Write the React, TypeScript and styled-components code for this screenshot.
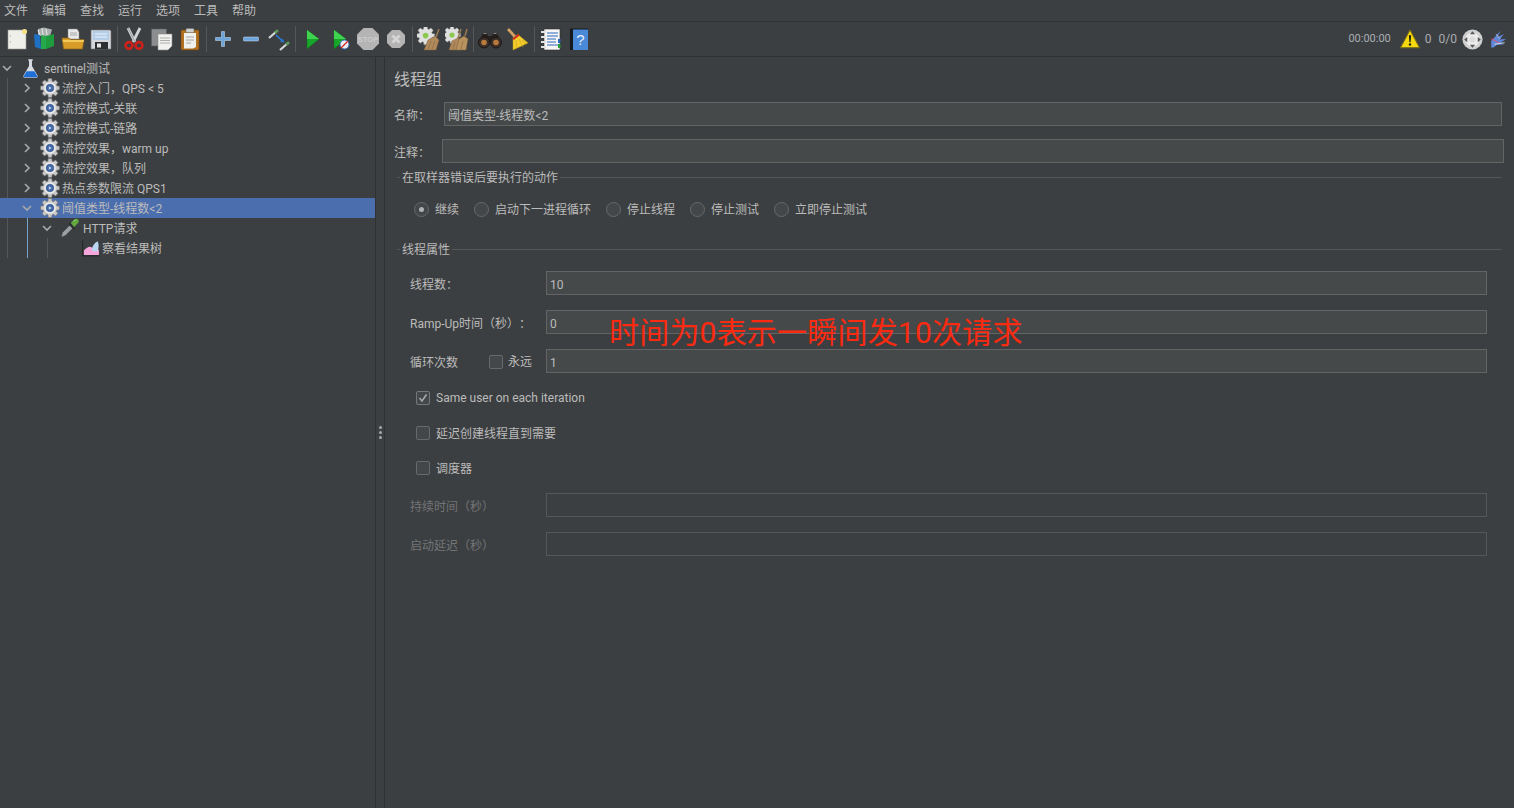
import React from 'react';
import styled, { createGlobalStyle } from 'styled-components';

const GlobalStyle = createGlobalStyle`
  html, body {
    margin: 0;
    height: 100%;
    overflow: hidden;
    background: #3c3f41;
  }
  body {
    color: #bbbbbb;
    font-family: Roboto, "Noto Sans CJK SC", sans-serif;
    font-size: 12px;
    line-height: 16px;
    text-spacing-trim: space-all;
  }
`;

const Window = styled.div`
  position: relative;
  display: flex;
  flex-direction: column;
  width: 1514px;
  height: 808px;
  overflow: hidden;
`;

const MenuBar = styled.div`
  display: flex;
  align-items: center;
  gap: 14px;
  height: 22px;
  padding: 1px 0 0 4px;
  border-bottom: 1px solid #2f3132;
  box-sizing: border-box;
`;

const MenuItem = styled.span`
  color: #bbbbbb;
`;

const Toolbar = styled.div`
  display: flex;
  align-items: center;
  height: 35px;
  padding-left: 3px;
  border-bottom: 1px solid #2f3132;
  box-sizing: border-box;
`;

const ToolButton = styled.div`
  display: flex;
  align-items: center;
  justify-content: center;
  width: 28px;
  height: 34px;
`;

const ToolSeparator = styled.div`
  width: 1px;
  height: 26px;
  margin: 0 2px;
  background: #55585a;
`;

const Status = styled.div`
  display: flex;
  align-items: center;
  margin-left: auto;
  padding-right: 7px;
  color: #a9adb3;
  font-size: 12px;
`;

const StatusTime = styled.span`
  font-size: 11px;
`;

const StatusText = styled.span<{ $left: number }>`
  margin-left: ${(p) => p.$left}px;
`;

const StatusIcon = styled.span<{ $left: number }>`
  display: flex;
  margin-left: ${(p) => p.$left}px;
`;

const Split = styled.div`
  flex: 1;
  display: flex;
  min-height: 0;
`;

const TreePane = styled.div`
  width: 375px;
  padding-top: 1px;
`;

const TreeRow = styled.div<{ $indent: number; $selected?: boolean }>`
  position: relative;
  display: flex;
  align-items: center;
  height: 20px;
  padding-left: ${(p) => p.$indent}px;
  background: ${(p) => (p.$selected ? '#4b6eaf' : 'transparent')};
  color: #bbbbbb;
  white-space: nowrap;
`;

const Guide = styled.span<{ $x: number; $active?: boolean }>`
  position: absolute;
  top: 0;
  bottom: 0;
  left: ${(p) => p.$x}px;
  width: 1px;
  background: ${(p) => (p.$active ? '#7aa3c9' : '#54575a')};
`;

const Chevron = styled.svg`
  flex: none;
  width: 12px;
  height: 12px;
  margin-right: 7px;
  fill: none;
  stroke: #a7a9ab;
  stroke-width: 1.6;
`;

const NodeIcon = styled.span<{ $gap: number }>`
  display: flex;
  flex: none;
  margin-right: ${(p) => p.$gap}px;
`;

const RowText = styled.span`
  padding-top: 1px;
`;

const Divider = styled.div`
  flex: none;
  display: flex;
  flex-direction: column;
  align-items: center;
  justify-content: center;
  gap: 2px;
  width: 8px;
  border-left: 1px solid #2f3132;
  border-right: 1px solid #2f3132;
`;

const GripDot = styled.span`
  width: 3px;
  height: 3px;
  border-radius: 50%;
  background: #a8a8a8;
`;

const Panel = styled.div`
  flex: 1;
  padding: 11px 10px 0 9px;
`;

const Title = styled.div`
  height: 20px;
  font-size: 16px;
  line-height: 23px;
  color: #bbbbbb;
`;

const NameRow = styled.div<{ $top: number; $inputLeft: number; $inputRight: number }>`
  display: grid;
  grid-template-columns: ${(p) => p.$inputLeft}px 1fr;
  align-items: center;
  margin-top: ${(p) => p.$top}px;
  margin-right: ${(p) => p.$inputRight}px;
`;

const RowLabel = styled.span`
  padding-top: 4px;
`;

const Input = styled.div<{ $disabled?: boolean }>`
  display: flex;
  align-items: center;
  height: 24px;
  padding: 3px 0 0 3px;
  box-sizing: border-box;
  border: 1px solid ${(p) => (p.$disabled ? '#55585a' : '#646464')};
  background: ${(p) => (p.$disabled ? 'transparent' : '#45494a')};
  color: #bbbbbb;
`;

const SectionTitle = styled.div<{ $top: number }>`
  display: flex;
  align-items: center;
  gap: 2px;
  height: 16px;
  margin: ${(p) => p.$top}px 2px 0 3px;
  &::before,
  &::after {
    content: '';
    height: 1px;
    background: #55585a;
  }
  &::before {
    width: 3px;
  }
  &::after {
    flex: 1;
  }
`;

const SectionText = styled.span`
  padding-top: 1px;
`;

const RadioGroup = styled.div`
  display: flex;
  align-items: center;
  gap: 15px;
  height: 16px;
  margin: 16px 0 0 20px;
`;

const RadioItem = styled.label`
  display: flex;
  align-items: center;
  gap: 6px;
`;

const ControlText = styled.span<{ $flush?: boolean }>`
  padding-top: ${(p) => (p.$flush ? 0 : 1)}px;
`;

const RadioCircle = styled.span<{ $on?: boolean }>`
  display: flex;
  align-items: center;
  justify-content: center;
  width: 15px;
  height: 15px;
  box-sizing: border-box;
  border: 1px solid #666a6c;
  border-radius: 50%;
  background: #43474a;
  &::after {
    content: '';
    display: ${(p) => (p.$on ? 'block' : 'none')};
    width: 5px;
    height: 5px;
    border-radius: 50%;
    background: #b0b0b0;
  }
`;

const Fields = styled.div`
  margin: 0 17px 0 16px;
`;

const FieldRow = styled.div<{ $top: number }>`
  display: grid;
  grid-template-columns: 136px 1fr;
  align-items: center;
  margin-top: ${(p) => p.$top}px;
`;

const FieldLabel = styled.span<{ $disabled?: boolean }>`
  padding-top: 4px;
  color: ${(p) => (p.$disabled ? '#727476' : '#bbbbbb')};
`;

const LoopLabel = styled.div`
  display: flex;
  align-items: center;
`;

const LoopForever = styled.span`
  display: flex;
  align-items: center;
  gap: 5px;
  margin-left: 31px;
  padding-top: 2px;
`;

const CheckRow = styled.div<{ $top: number }>`
  display: flex;
  align-items: center;
  gap: 6px;
  height: 16px;
  margin: ${(p) => p.$top}px 0 0 6px;
`;

const CheckBox = styled.span<{ $on?: boolean }>`
  display: flex;
  align-items: center;
  justify-content: center;
  width: 14px;
  height: 14px;
  box-sizing: border-box;
  border: 1px solid ${(p) => (p.$on ? '#74787a' : '#666a6c')};
  border-radius: 2px;
  background: #43474a;
`;

const Annotation = styled.div`
  position: absolute;
  top: 313px;
  left: 609px;
  color: #fb2a10;
  font-size: 30px;
  line-height: 40px;
  letter-spacing: 0.2px;
  white-space: nowrap;
`;

const gearPath = (() => {
  const pts: string[] = [];
  for (let i = 0; i < 8; i++) {
    const a = (i * Math.PI) / 4 - Math.PI / 8;
    const s = Math.PI / 4;
    const at = (r: number, t: number) =>
      `${(12 + r * Math.cos(t)).toFixed(2)} ${(12 + r * Math.sin(t)).toFixed(2)}`;
    pts.push(at(8.6, a + s * 0.1), at(11.6, a + s * 0.27), at(11.6, a + s * 0.73), at(8.6, a + s * 0.9));
  }
  return `M${pts.join('L')}Z`;
})();

const Svg: React.FC<{ size?: number; children: React.ReactNode }> = ({ size = 24, children }) => (
  <svg width={size} height={size} viewBox="0 0 24 24">
    {children}
  </svg>
);

const Gear = () => (
  <Svg size={20}>
    <path d={gearPath} fill="#c9c9c9" stroke="#6e6e6e" strokeWidth="0.8" />
    <circle cx="12" cy="12" r="7" fill="#eeeeee" />
    <circle cx="12" cy="12" r="4.600" fill="#3f66a8" stroke="#27406e" strokeWidth="0.6" />
    <path d="M10.600 9.800l3.600 2.200-3.600 2.200z" fill="#c4d4ec" />
  </Svg>
);

const Flask = () => (
  <Svg size={21}>
    <path d="M9.500 1.500h5v1.500h-.8v6L20 20a1.600 1.600 0 0 1-1.400 2.500H5.400A1.600 1.600 0 0 1 4 20l6.300-11V3h-.8z" fill="#d6dbe2" />
    <path d="M7.600 15h8.800l3.300 5.600a1 1 0 0 1-.9 1.400H5.200a1 1 0 0 1-.9-1.400z" fill="#1f6fd6" />
  </Svg>
);

const Dropper = () => (
  <Svg size={20}>
    <path d="M1.500 23l1.500-5.500 9-9 3.500 3.500-9 9z" fill="#9aa0a4" stroke="#3a3d40" strokeWidth="0.5" />
    <path d="M10 7.500l6.500 6.500 2-2L12 5.500z" fill="#2b2d2f" />
    <path d="M13 6l4.500-4.500c2-1.500 5-.5 5 2 0 1-.5 1.900-1 2.500L17 11z" fill="#62a83c" />
    <path d="M16 4l3-2" stroke="#a6d884" strokeWidth="1" />
  </Svg>
);

const ResultTree = () => (
  <Svg size={20}>
    <path d="M2 3v18.500h20" fill="none" stroke="#26282a" strokeWidth="1.400" />
    <path d="M3.500 20.500V15c3-3 5-4.500 7-4.500s4 2 6 2.500l5 1v6.500z" fill="#f6a6dc" />
    <path d="M13 14c.5-4 3-8 7-10 1.500 3 1.500 8 0 11.500-2 1.500-5.500 1-7-1.500z" fill="#bcd6f2" />
  </Svg>
);

const icons: Record<string, React.ReactNode> = {
  newFile: (
    <Svg>
      <rect x="3" y="3" width="18" height="19" fill="#efefe9" stroke="#9a9a9a" strokeWidth="0.6" />
      <circle cx="19.500" cy="4.500" r="2.600" fill="#f5e08a" />
      <circle cx="5.500" cy="9" r="0.7" fill="#b5b5b5" />
      <circle cx="5.500" cy="15" r="0.7" fill="#b5b5b5" />
    </Svg>
  ),
  templates: (
    <Svg>
      <path d="M5 2l6-1.500 8 2-2 6.500H5z" fill="#a9b0ad" />
      <path d="M1 7l6 1 1 14-6-2z" fill="#1f6fc4" />
      <path d="M8 8l5 1v13H8z" fill="#27a84a" />
      <path d="M13 9l8-2v12l-8 3z" fill="#1f9a3c" />
      <path d="M5 3l2 5M9 1l1 7M13 2l1 6" stroke="#e0e4e2" strokeWidth="1.200" />
    </Svg>
  ),
  open: (
    <Svg>
      <path d="M7 2h9l2 3v7H7z" fill="#e8e8e8" stroke="#8a8a8a" strokeWidth="0.5" />
      <path d="M9 6h7M9 8h7" stroke="#9a9a9a" strokeWidth="0.8" />
      <path d="M1 11h7l1.500 1.500H23l-1.500 9.500H2.500z" fill="#d89c28" stroke="#8a6414" strokeWidth="0.7" />
      <path d="M1.500 13H23l-.3 2H2z" fill="#f3c95c" />
    </Svg>
  ),
  save: (
    <Svg>
      <path d="M2 3h19l1 1v18H2z" fill="#d4d8dc" stroke="#6e7074" strokeWidth="0.6" />
      <rect x="4" y="4" width="16" height="9" fill="#b4cde8" />
      <path d="M6 7h12M6 10h12" stroke="#eef3f8" strokeWidth="1" />
      <rect x="6" y="15" width="13" height="7" fill="#2c2e32" />
      <rect x="8" y="16.500" width="4" height="4" fill="#e6e6e6" />
    </Svg>
  ),
  cut: (
    <Svg>
      <path d="M6 1l7 14M18 1l-7 14" stroke="#d0d2d4" strokeWidth="2.800" />
      <path d="M6 1l7 14" stroke="#84878a" strokeWidth="0.7" />
      <circle cx="7" cy="18.500" r="3.400" fill="none" stroke="#d0201a" strokeWidth="2.600" />
      <circle cx="17" cy="18.500" r="3.400" fill="none" stroke="#d0201a" strokeWidth="2.600" />
    </Svg>
  ),
  copy: (
    <Svg>
      <rect x="1.500" y="2" width="15" height="17" fill="#8b8d8f" stroke="#5c5e60" strokeWidth="0.6" />
      <path d="M8 7h14v12l-4 4H8z" fill="#f1f1ef" stroke="#8a8a8a" strokeWidth="0.6" />
      <path d="M10 11h10M10 13.500h10M10 16h10" stroke="#9c9c9c" strokeWidth="0.8" />
    </Svg>
  ),
  paste: (
    <Svg>
      <rect x="3" y="3" width="18" height="20" rx="1" fill="#b07220" stroke="#6e4410" strokeWidth="0.6" />
      <path d="M6 6h12v14l-3 1.500H6z" fill="#f0f0ec" />
      <rect x="8" y="1.500" width="8" height="4" rx="1" fill="#cfd0d0" stroke="#6a6a6a" strokeWidth="0.5" />
      <path d="M8 10h8M8 13h8M8 16h5" stroke="#9c9c9c" strokeWidth="0.9" />
    </Svg>
  ),
  plus: (
    <Svg>
      <path d="M10.500 4.500h3v6h6v3h-6v6h-3v-6h-6v-3h6z" fill="#6ea4dc" stroke="#cfe0f2" strokeWidth="0.5" />
    </Svg>
  ),
  minus: (
    <Svg>
      <rect x="4.500" y="10" width="15" height="4" rx="0.800" fill="#6ea4dc" stroke="#cfe0f2" strokeWidth="0.5" />
    </Svg>
  ),
  toggle: (
    <Svg>
      <path d="M2 11l8-7" stroke="#d6d8d8" strokeWidth="2.200" />
      <path d="M8 5.800l3-2.600" stroke="#5f9a5c" strokeWidth="2.600" />
      <path d="M13 23l8-7" stroke="#d6d8d8" strokeWidth="2.200" />
      <path d="M19 17.800l3-2.600" stroke="#5f9a5c" strokeWidth="2.600" />
      <path d="M9 8l6 5.500" stroke="#2a7ad8" strokeWidth="1.500" />
      <path d="M17.500 15.500l-4.500-.8 2.800-3z" fill="#2a7ad8" />
    </Svg>
  ),
  start: (
    <Svg>
      <path d="M7 3l12 9-12 10z" fill="#17a52a" stroke="#0c6e1a" strokeWidth="0.5" />
      <path d="M7 3l12 9H7z" fill="#3ed24e" />
    </Svg>
  ),
  startNoPause: (
    <Svg>
      <path d="M6 3l12 9-12 10z" fill="#17a52a" stroke="#0c6e1a" strokeWidth="0.5" />
      <path d="M6 3l12 9H6z" fill="#3ed24e" />
      <circle cx="16.500" cy="17.500" r="4.500" fill="#e8eef6" stroke="#3a70b8" strokeWidth="1" />
      <path d="M13 21l7-7" stroke="#d8281c" strokeWidth="1.200" />
    </Svg>
  ),
  stop: (
    <Svg>
      <path d="M7.500 1h9L23 7.500v9L16.500 23h-9L1 16.500v-9z" fill="#b4b4b4" />
      <text x="12" y="14.700" textAnchor="middle" fontSize="7.500" fontWeight="700" fill="#cccccc" fontFamily="Liberation Sans, sans-serif">
        STOP
      </text>
    </Svg>
  ),
  shutdown: (
    <Svg>
      <path d="M8 3h8l5 5v8l-5 5H8l-5-5V8z" fill="#b4b4b4" />
      <path d="M8.500 8.500l7 7M15.500 8.500l-7 7" stroke="#d6d6d6" strokeWidth="2.600" />
    </Svg>
  ),
  clear: (
    <Svg>
      <g transform="translate(-1 -1) scale(.8)">
        <path d={gearPath} fill="#e0e0e0" stroke="#8a8a8a" strokeWidth="0.6" />
        <circle cx="12" cy="12" r="3.500" fill="#8cc850" />
      </g>
      <path d="M7 23l4-10 7-4 4 4-3 10z" fill="#b08a5c" stroke="#7a5c38" strokeWidth="0.5" />
      <path d="M11 22l3-8M15 22l3-8" stroke="#8a6a42" strokeWidth="0.7" />
      <path d="M19 10l3-8" stroke="#9a7a50" strokeWidth="1.600" />
    </Svg>
  ),
  clearAll: (
    <Svg>
      <g transform="translate(-2 -1) scale(.75)">
        <path d={gearPath} fill="#e0e0e0" stroke="#8a8a8a" strokeWidth="0.6" />
        <circle cx="12" cy="12" r="3.500" fill="#8cc850" />
      </g>
      <path d="M4 23l3-9 6-3 4 3-2 9z" fill="#b08a5c" stroke="#7a5c38" strokeWidth="0.5" />
      <path d="M11 23l3-11 5-3 4 3-2 11z" fill="#b8925f" stroke="#7a5c38" strokeWidth="0.5" />
      <path d="M8 22l2-7M16 22l2-8" stroke="#8a6a42" strokeWidth="0.7" />
      <path d="M13 11l3-9M20 9l2-7" stroke="#9a7a50" strokeWidth="1.500" />
    </Svg>
  ),
  search: (
    <Svg>
      <path d="M5 6h4l1 3h4l1-3h4l4 9H1z" fill="#26211e" />
      <path d="M5.500 6.500h3M15.500 6.500h3" stroke="#8a8a8a" strokeWidth="1" />
      <circle cx="6" cy="15.500" r="5.500" fill="#3a2e28" stroke="#15110f" strokeWidth="0.8" />
      <circle cx="18" cy="15.500" r="5.500" fill="#3a2e28" stroke="#15110f" strokeWidth="0.8" />
      <circle cx="6" cy="15.500" r="2.800" fill="#b87a3c" />
      <circle cx="18" cy="15.500" r="2.800" fill="#b87a3c" />
    </Svg>
  ),
  broom: (
    <Svg>
      <path d="M2 2l8 9" stroke="#d0a060" strokeWidth="2.800" />
      <path d="M7 11l5-3.500 10 8.500-15 7z" fill="#f2cc2c" stroke="#b89414" strokeWidth="0.5" />
      <path d="M6.500 11.500l6-4.500 1.200 1.500-6 4.500z" fill="#d02a20" />
      <path d="M10 13l1 8M13 12l4 8M16 13l4 4" stroke="#c8a016" strokeWidth="0.6" />
    </Svg>
  ),
  functions: (
    <Svg>
      <rect x="5" y="2" width="16" height="21" fill="#f6f6f6" stroke="#2c2e30" strokeWidth="0.6" />
      <path d="M8 6h11M8 9h11M8 12h9M8 15h9M8 18h11" stroke="#2a66b8" strokeWidth="1" />
      <path d="M2 5h5M2 10h5M2 15h5M2 20h5" stroke="#e2e2e2" strokeWidth="1.800" />
      <rect x="19" y="12" width="2.500" height="4" fill="#2a66b8" />
      <rect x="19" y="17" width="2.500" height="4" fill="#2a9a3c" />
    </Svg>
  ),
  help: (
    <Svg>
      <rect x="3" y="1.500" width="18" height="21.500" fill="#16191c" />
      <rect x="6" y="2.500" width="15" height="20.500" fill="#4a88d8" />
      <text x="13.500" y="18" textAnchor="middle" fontSize="15" fill="#e6eefa" fontFamily="Liberation Sans, sans-serif">
        ?
      </text>
    </Svg>
  ),
  warning: (
    <Svg size={22}>
      <path d="M12 2l10.500 19.500h-21z" fill="#f6d80e" stroke="#6e6420" strokeWidth="1.200" strokeLinejoin="round" />
      <path d="M10.800 8h2.400l-.5 7.500h-1.400z" fill="#20200c" />
      <circle cx="12" cy="18" r="1.300" fill="#20200c" />
    </Svg>
  ),
  loggers: (
    <Svg size={21}>
      <circle cx="12" cy="12" r="11.500" fill="#d0d0d0" />
      <circle cx="12" cy="12" r="8" fill="#ececec" />
      <path d="M12 2.500l3 3.500H9zM12 21.500l3-3.500H9zM2.500 12L6 9v6zM21.500 12L18 9v6z" fill="#55585a" />
      <circle cx="12" cy="12" r="3.500" fill="#dcdcdc" />
    </Svg>
  ),
  feather: (
    <Svg size={19}>
      <path d="M4 14L16 1l-4 8 8-4-5 7 8-1-7 5 5 2-10 1-4 3H4z" fill="#5f86d8" />
      <path d="M4 11l11 6" stroke="#e8506c" strokeWidth="1.200" />
      <path d="M8 18l13-2" stroke="#e8eef8" strokeWidth="1" />
      <path d="M10 5l5 6" stroke="#e8eef8" strokeWidth="0.8" />
    </Svg>
  ),
};

const toolGroups = [
  ['newFile', 'templates', 'open', 'save'],
  ['cut', 'copy', 'paste'],
  ['plus', 'minus', 'toggle'],
  ['start', 'startNoPause', 'stop', 'shutdown'],
  ['clear', 'clearAll'],
  ['search', 'broom'],
  ['functions', 'help'],
];

const menus = ['文件', '编辑', '查找', '运行', '选项', '工具', '帮助'];

const testPlans = [
  '流控入门，QPS < 5',
  '流控模式-关联',
  '流控模式-链路',
  '流控效果，warm up',
  '流控效果，队列',
  '热点参数限流 QPS1',
];

const radios = ['继续', '启动下一进程循环', '停止线程', '停止测试', '立即停止测试'];

const ChevronIcon = ({ open }: { open?: boolean }) => (
  <Chevron viewBox="0 0 12 12">
    <path d={open ? 'M2 4l4 4 4-4' : 'M4 2l4 4-4 4'} />
  </Chevron>
);

function App() {
  return (
    <Window>
      <GlobalStyle />
      <MenuBar>
        {menus.map((m) => (
          <MenuItem key={m}>{m}</MenuItem>
        ))}
      </MenuBar>
      <Toolbar>
        {toolGroups.map((group, i) => (
          <React.Fragment key={group[0]}>
            {i > 0 && <ToolSeparator />}
            {group.map((name) => (
              <ToolButton key={name}>{icons[name]}</ToolButton>
            ))}
          </React.Fragment>
        ))}
        <Status>
          <StatusTime>00:00:00</StatusTime>
          <StatusIcon $left={8}>{icons.warning}</StatusIcon>
          <StatusText $left={4}>0</StatusText>
          <StatusText $left={7}>0/0</StatusText>
          <StatusIcon $left={5}>{icons.loggers}</StatusIcon>
          <StatusIcon $left={5}>{icons.feather}</StatusIcon>
        </Status>
      </Toolbar>
      <Split>
        <TreePane>
          <TreeRow $indent={1}>
            <ChevronIcon open />
            <NodeIcon $gap={3}>
              <Flask />
            </NodeIcon>
            <RowText>sentinel测试</RowText>
          </TreeRow>
          {testPlans.map((name) => (
            <TreeRow key={name} $indent={21}>
              <Guide $x={7} />
              <ChevronIcon />
              <NodeIcon $gap={2}>
                <Gear />
              </NodeIcon>
              <RowText>{name}</RowText>
            </TreeRow>
          ))}
          <TreeRow $indent={21} $selected>
            <ChevronIcon open />
            <NodeIcon $gap={2}>
              <Gear />
            </NodeIcon>
            <RowText>阈值类型-线程数&lt;2</RowText>
          </TreeRow>
          <TreeRow $indent={41}>
            <Guide $x={7} />
            <Guide $x={27} $active />
            <ChevronIcon open />
            <NodeIcon $gap={3}>
              <Dropper />
            </NodeIcon>
            <RowText>HTTP请求</RowText>
          </TreeRow>
          <TreeRow $indent={81}>
            <Guide $x={7} />
            <Guide $x={27} $active />
            <Guide $x={47} />
            <NodeIcon $gap={1}>
              <ResultTree />
            </NodeIcon>
            <RowText>察看结果树</RowText>
          </TreeRow>
        </TreePane>
        <Divider>
          <GripDot />
          <GripDot />
          <GripDot />
        </Divider>
        <Panel>
          <Title>线程组</Title>
          <NameRow $top={14} $inputLeft={50} $inputRight={2}>
            <RowLabel>名称：</RowLabel>
            <Input>阈值类型-线程数&lt;2</Input>
          </NameRow>
          <NameRow $top={13} $inputLeft={48} $inputRight={0}>
            <RowLabel>注释：</RowLabel>
            <Input />
          </NameRow>
          <SectionTitle $top={6}>
            <SectionText>在取样器错误后要执行的动作</SectionText>
          </SectionTitle>
          <RadioGroup>
            {radios.map((r, i) => (
              <RadioItem key={r}>
                <RadioCircle $on={i === 0} />
                <ControlText>{r}</ControlText>
              </RadioItem>
            ))}
          </RadioGroup>
          <SectionTitle $top={24}>
            <SectionText>线程属性</SectionText>
          </SectionTitle>
          <Fields>
            <FieldRow $top={14}>
              <FieldLabel>线程数：</FieldLabel>
              <Input>10</Input>
            </FieldRow>
            <FieldRow $top={15}>
              <FieldLabel>Ramp-Up时间（秒）：</FieldLabel>
              <Input>0</Input>
            </FieldRow>
            <FieldRow $top={15}>
              <LoopLabel>
                <FieldLabel>循环次数</FieldLabel>
                <LoopForever>
                  <CheckBox />
                  永远
                </LoopForever>
              </LoopLabel>
              <Input>1</Input>
            </FieldRow>
            <CheckRow $top={17}>
              <CheckBox $on>
                <svg width="10" height="10" viewBox="0 0 10 10" fill="none" stroke="#a8a8a8" strokeWidth="1.600">
                  <path d="M1.500 5l2.500 3 4.500-6.500" />
                </svg>
              </CheckBox>
              <ControlText $flush>Same user on each iteration</ControlText>
            </CheckRow>
            <CheckRow $top={19}>
              <CheckBox />
              <ControlText>延迟创建线程直到需要</ControlText>
            </CheckRow>
            <CheckRow $top={19}>
              <CheckBox />
              <ControlText>调度器</ControlText>
            </CheckRow>
            <FieldRow $top={17}>
              <FieldLabel $disabled>持续时间（秒）</FieldLabel>
              <Input $disabled />
            </FieldRow>
            <FieldRow $top={15}>
              <FieldLabel $disabled>启动延迟（秒）</FieldLabel>
              <Input $disabled />
            </FieldRow>
          </Fields>
        </Panel>
      </Split>
      <Annotation>时间为0表示一瞬间发10次请求</Annotation>
    </Window>
  );
}

export default App;
